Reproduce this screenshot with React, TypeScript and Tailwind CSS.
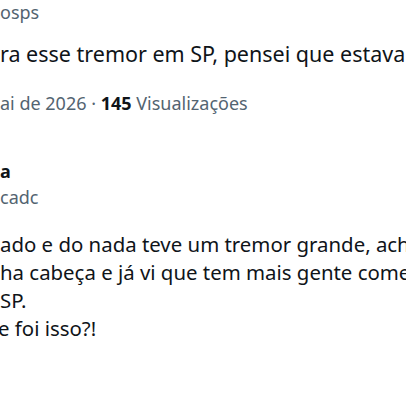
export default function App() {
  return (
    <div
      className="w-[406px] h-[406px] overflow-hidden bg-white text-[#0f1419]"
      style={{ fontFamily: '"Noto Sans", "Open Sans", sans-serif' }}
    >
      <div className="flex flex-col whitespace-nowrap">
        {/* first tweet */}
        <p className="text-[18px] leading-[24px] text-[#536471]">osps</p>
        <p className="mt-[15px] text-[21.5px] leading-[30px]">
          ra esse tremor em SP, pensei que estava dormindo
        </p>
        <p className="mt-[22px] text-[18px] leading-[24px] text-[#536471]">
          ai de 2026 · <span className="font-bold text-[#0f1419]">145</span> Visualizações
        </p>

        {/* reply */}
        <p className="mt-[44px] text-[18px] leading-[24px] font-bold">a</p>
        <p className="mt-[2px] text-[18px] leading-[24px] text-[#536471]">cadc</p>
        <div className="mt-[21px] text-[20.4px] leading-[28px]">
          <p>ado e do nada teve um tremor grande, achei que</p>
          <p>ha cabeça e já vi que tem mais gente comentando</p>
          <p>SP.</p>
          <p className="-ml-[2px]">e foi isso?!</p>
        </div>
      </div>
    </div>
  );
}
